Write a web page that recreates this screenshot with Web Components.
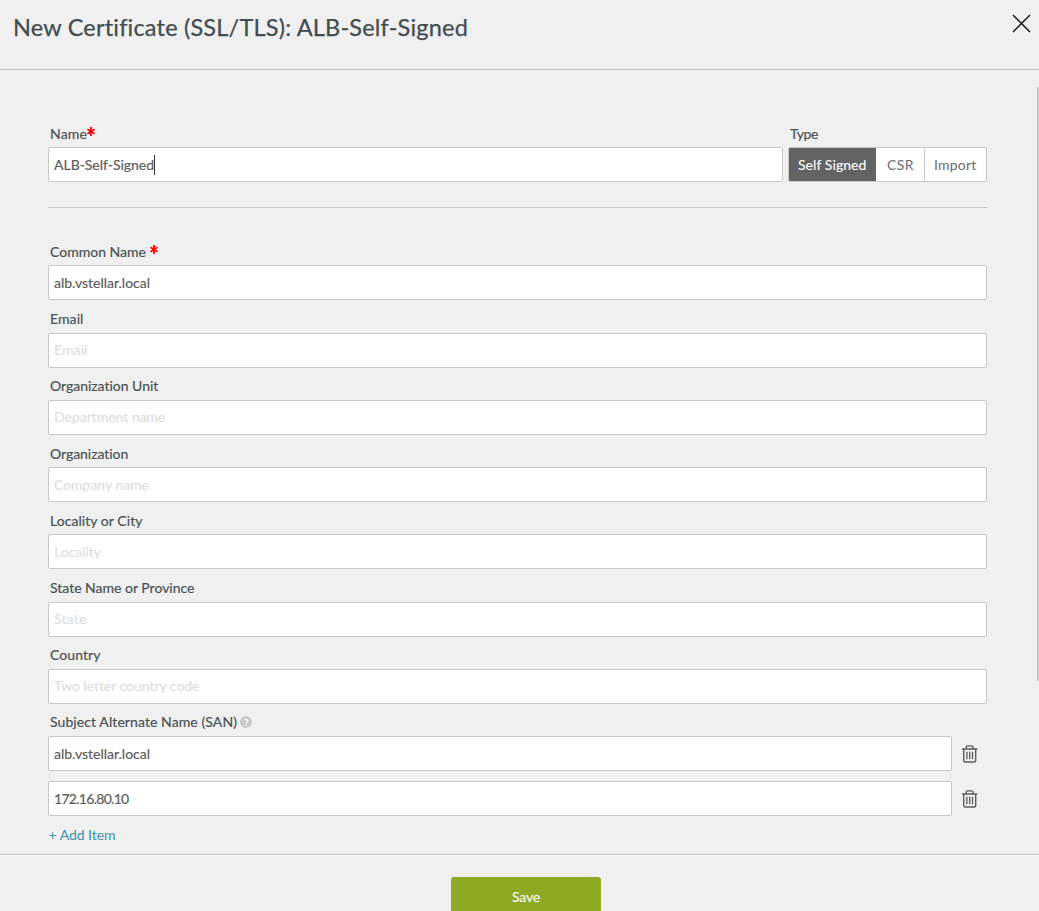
<!DOCTYPE html>
<html lang="en">
<head>
<meta charset="utf-8">
<title>New Certificate</title>
<style>
html, body { margin: 0; height: 100%; overflow: hidden; background: #f0f0f0; }
body { font-family: Lato, "Open Sans", sans-serif; font-size: 14px; color: #4a5254; }
</style>
</head>
<body>
<cert-dialog></cert-dialog>
<script>
const define = (name, html, setup) => customElements.define(name, class extends HTMLElement {
  connectedCallback() {
    if (this.shadowRoot) return;
    const root = this.attachShadow({ mode: 'open' });
    const t = document.createElement('template');
    t.innerHTML = typeof html === 'function' ? html(this) : html;
    root.append(t.content.cloneNode(true));
    if (setup) setup(this, root);
  }
});

// One line of text whose tracking is adjusted so that it spans the width in "w".
define('fit-text', `<style>
  :host { display: inline-block; white-space: nowrap; line-height: 20px; }
  span { display: inline-block; -webkit-text-stroke: var(--stroke, 0.2px) currentColor; }
</style><span><slot></slot></span>`, (el, root) => {
  const span = root.querySelector('span');
  const w = +el.getAttribute('w');
  const n = el.textContent.length;
  if (w) span.style.letterSpacing = ((w - span.getBoundingClientRect().width) / n).toFixed(3) + 'px';
});

define('text-box', `<style>
  :host { display: flex; align-items: center; box-sizing: border-box; height: 35px; padding: 0 0 0 5px;
    background: #fff; border: 1px solid #c8c8c8; border-radius: 2px; color: #5d5d5d; }
  :host([empty]) { color: #e0e0e0; }
</style><slot></slot>`);

define('form-field', el => `<style>
  :host { display: block; height: 67.22px; }
  .label { display: flex; height: 24.45px; padding-left: 2px; }
  fit-text { margin-top: .9px; }
</style>
<div class="label"><fit-text w="${el.getAttribute('lw')}">${el.getAttribute('label')}</fit-text><slot name="mark"></slot></div>
<slot></slot>`);

define('required-mark', `<style>:host { display: block; width: 8px; height: 9px; margin: 4px 0 0 var(--gap, 0px); } svg { display: block; }</style>
<svg width="8" height="9" viewBox="0 0 8 9" fill="none" stroke="#f00" stroke-width="1.8"><path d="M4 0v9M.4 2.3l7.2 4.4M.4 6.7l7.2-4.4"/></svg>`);

define('help-mark', `<style>:host { display: grid; place-items: center; width: 12px; height: 12px; margin: 4.4px 0 0 3.3px;
  border-radius: 50%; background: #c9c9c9; color: #fff; font: bold 10px/12px Lato, sans-serif; }</style>?`);

define('trash-icon', `<style>:host { display: block; width: 16px; height: 18px; margin-top: 1px; } svg { display: block; }</style>
<svg width="16" height="18" viewBox="0 0 16 18" fill="none" stroke="#5c5c5c">
<path stroke-width="1.4" d="M0 4h15.4M4.2 3.8V2.3Q4.2.9 5.6.9h4q1.4 0 1.4 1.4v1.5M1.7 4.2v11.3q0 1.5 1.5 1.5h9q1.5 0 1.5-1.5V4.2"/>
<path stroke-width="1.3" d="M4.9 6.7v7.6M7.7 6.7v7.6M10.5 6.7v7.6"/></svg>`);

define('san-row', `<style>
  :host { display: flex; align-items: center; gap: 10px; width: 930px; height: 35px; margin-bottom: 10px; }
  .box { width: 904px; flex: none; }
</style><text-box class="box"><slot></slot></text-box><trash-icon></trash-icon>`);

define('type-switch', `<style>
  :host { display: flex; box-sizing: border-box; width: 199px; height: 35px; border: 1px solid #c8c8c8; border-radius: 2px;
    background: #fff; color: #6b6b6b; --stroke: 0px; overflow: hidden; }
  div { display: flex; align-items: center; box-sizing: border-box; }
  .on { width: 87px; padding-left: 9px; background: #636363; color: #fff; --stroke: .1px; }
  .csr { width: 49px; padding-left: 11px; border-right: 1px solid #c8c8c8; }
  .imp { padding-left: 9px; }
</style>
<div class="on"><fit-text w="68.5">Self Signed</fit-text></div>
<div class="csr"><fit-text w="27">CSR</fit-text></div>
<div class="imp"><fit-text w="42.5">Import</fit-text></div>`);

define('dialog-header', `<style>
  :host { display: flex; justify-content: space-between; box-sizing: border-box; height: 70px; flex: none;
    border-bottom: 1px solid #c0c0c0; padding: 14px 8px 0 13px; color: #434c4f; font-size: 23.5px; --stroke: .25px; }
  svg { display: block; }
</style><slot></slot>
<svg width="19" height="19" viewBox="0 0 19 19" stroke="#111" stroke-width="1.4"><path d="M1 1l17 17M18 1L1 18"/></svg>`);

define('dialog-footer', `<style>
  :host { display: block; flex: none; box-sizing: border-box; height: 57px; border-top: 1px solid #c0c0c0; box-shadow: inset 0 1px #fafafa; padding: 22px 0 0 451px; overflow: hidden; }
  div { display: flex; justify-content: center; box-sizing: border-box; width: 150px; height: 40px; padding-top: 10px;
    background: #8daa22; color: #fff; border-radius: 3px; --stroke: .1px; }
</style><div><fit-text w="28">Save</fit-text></div>`);

define('cert-dialog', `<style>
  :host { display: flex; flex-direction: column; width: 1039px; height: 911px; background: #f0f0f0; }
  main { display: flex; flex: 1; min-height: 0; justify-content: space-between; }
  .title { margin-top: 3px; }
  .form { width: 939px; margin-left: 48px; padding-top: 53px; }
  .top { display: flex; gap: 5px; height: 84px; border-bottom: 1px solid #c8c8c8; margin-bottom: 33px; }
  .name { width: 735px; }
  .caret { width: 1px; height: 20px; background: #333; }
  .cn { --gap: 4px; }
  .first { margin-top: 1px; }
  .second { margin-top: 2.3px; }
  .add { color: #3b90b3; margin: -1.3px 0 0 .5px; --stroke: 0px; }
  .thumb { width: 2px; height: 594px; margin-top: 17px; background: #c6c6c6; }
</style>
<dialog-header><fit-text class="title" w="455">New Certificate (SSL/TLS): ALB-Self-Signed</fit-text></dialog-header>
<main>
  <div class="form">
    <div class="top">
      <form-field class="name" label="Name" lw="37"><required-mark slot="mark"></required-mark><text-box><fit-text w="100">ALB-Self-Signed</fit-text><i class="caret"></i></text-box></form-field>
      <form-field label="Type" lw="28"><type-switch></type-switch></form-field>
    </div>
    <form-field class="cn" label="Common Name" lw="96"><required-mark slot="mark"></required-mark><text-box><fit-text w="96">alb.vstellar.local</fit-text></text-box></form-field>
    <form-field label="Email" lw="33.5"><text-box empty><fit-text w="33.5">Email</fit-text></text-box></form-field>
    <form-field label="Organization Unit" lw="108.5"><text-box empty><fit-text w="111.5">Department name</fit-text></text-box></form-field>
    <form-field label="Organization" lw="78.5"><text-box empty><fit-text w="95">Company name</fit-text></text-box></form-field>
    <form-field label="Locality or City" lw="92.5"><text-box empty><fit-text w="47">Locality</fit-text></text-box></form-field>
    <form-field label="State Name or Province" lw="144.5"><text-box empty><fit-text w="32.5">State</fit-text></text-box></form-field>
    <form-field label="Country" lw="50.5"><text-box empty><fit-text w="145">Two letter country code</fit-text></text-box></form-field>
    <form-field label="Subject Alternate Name (SAN)" lw="187"><help-mark slot="mark"></help-mark><san-row><fit-text class="first" w="96">alb.vstellar.local</fit-text></san-row></form-field>
    <san-row class="second"><fit-text w="74.5">172.16.80.10</fit-text></san-row>
    <fit-text class="add" w="67">+ Add Item</fit-text>
  </div>
  <div class="thumb"></div>
</main>
<dialog-footer></dialog-footer>`);
</script>
</body>
</html>
